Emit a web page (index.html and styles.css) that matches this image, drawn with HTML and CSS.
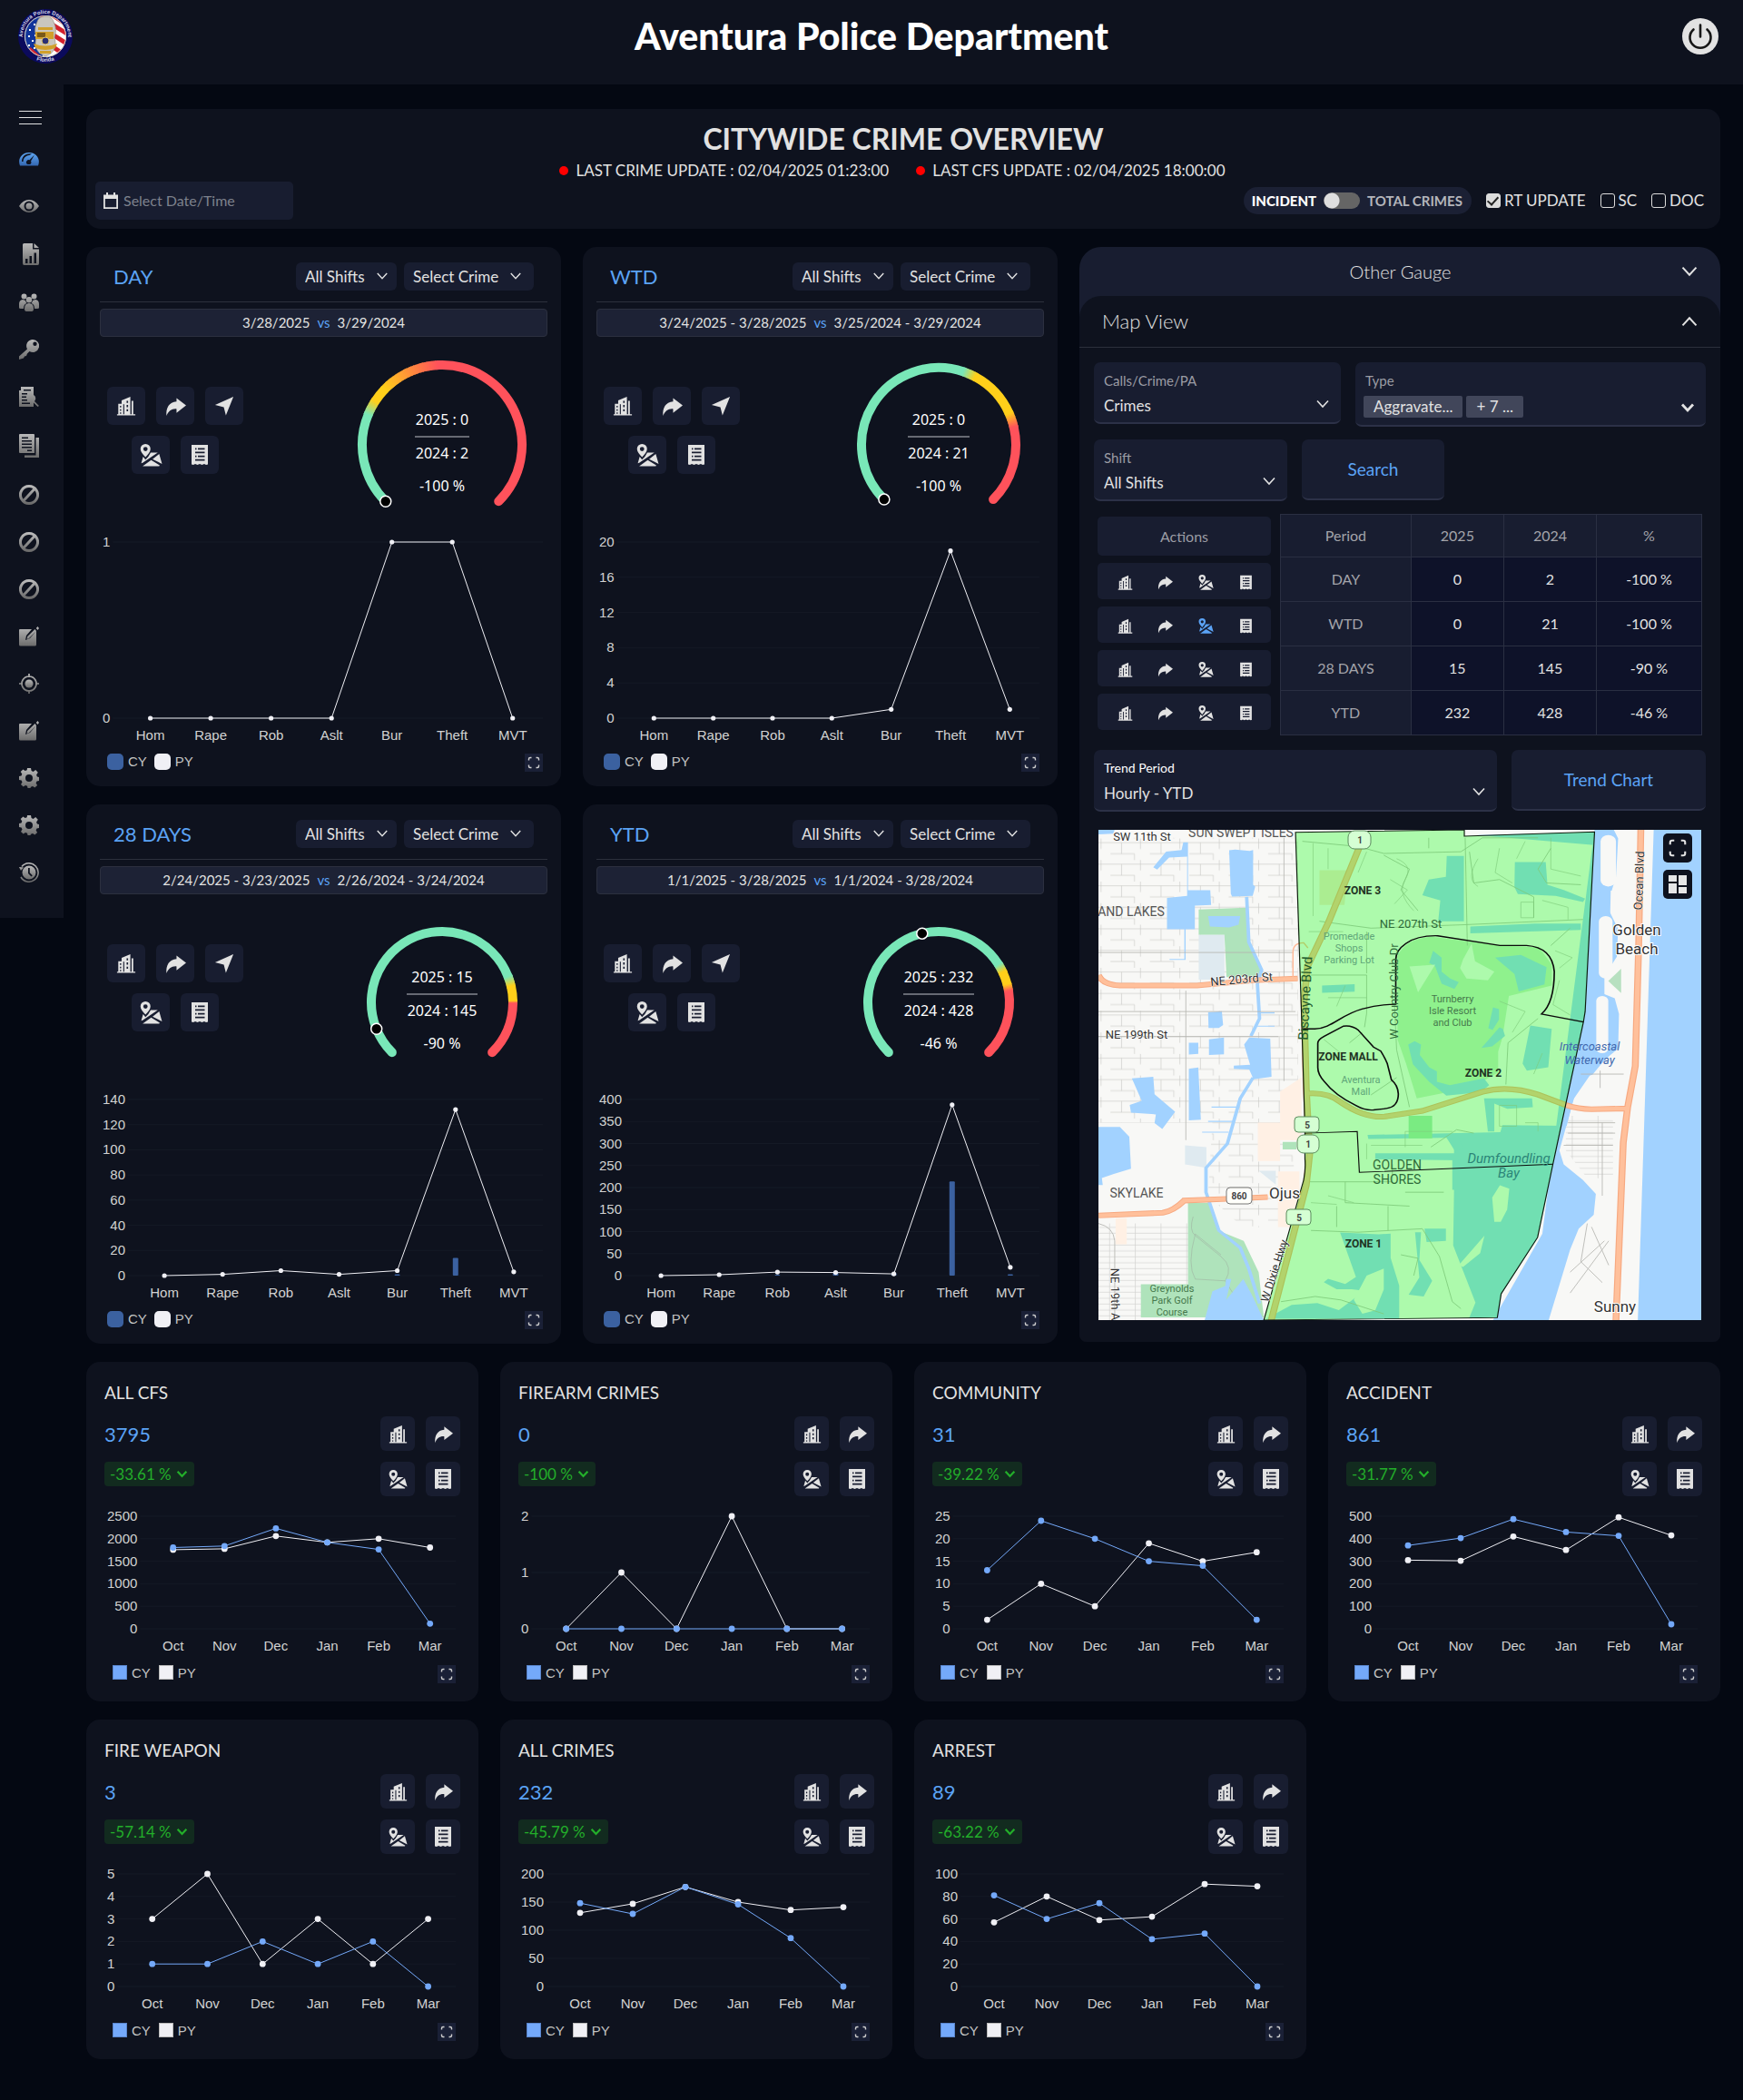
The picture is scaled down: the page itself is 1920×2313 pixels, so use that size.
FILE: index.html
```html
<!DOCTYPE html>
<html lang="en">
<head>
<meta charset="utf-8">
<meta name="viewport" content="width=device-width, initial-scale=1">
<title>Aventura Police Department</title>
<link rel="stylesheet" href="styles.css">
</head>
<body>
<svg class="sprite" width="0" height="0" aria-hidden="true">
  <defs>
    <linearGradient id="gray" x1="0" y1="0" x2="0" y2="1"><stop offset="0" stop-color="#b9b9b9"/><stop offset="1" stop-color="#6c6c6c"/></linearGradient>
    <linearGradient id="blue" x1="0" y1="0" x2="0" y2="1"><stop offset="0" stop-color="#5fa8f5"/><stop offset="1" stop-color="#3467b0"/></linearGradient>
  </defs>
  <symbol id="i-building" viewBox="0 0 24 24"><path fill-rule="evenodd" d="M1 22h1.500V9.500h4V5.500L17 1v21h1.500V6h2v16H23v1.500H1zM4.500 12v2H6v-2zm0 4v2H6v-2zm0 4v1.500H6V20zM12.500 6v2.500h1.800V6zm0 5v2.500h1.800V11zm0 5v2.500h1.800V16zM8.500 10v12h1.200V10z"/></symbol>
  <symbol id="i-share" viewBox="0 0 24 24"><path d="M13 2.500 24 11l-11 8.500V15C7.500 14.500 3.500 17.500 1.500 23 .5 14 4.500 7 13 6.500z"/></symbol>
  <symbol id="i-nav" viewBox="0 0 24 24"><path d="M23 1 14 23.500 11.500 13.500 1 11z"/></symbol>
  <symbol id="i-map" viewBox="0 0 24 24"><path fill-rule="evenodd" d="M6 0a5.300 5.300 0 0 1 5.300 5.300c0 2.800-2.600 5.700-5.300 8.700C3.300 11 .7 8.100.7 5.300A5.300 5.300 0 0 1 6 0zm0 3a2.300 2.300 0 1 0 0 4.600A2.300 2.300 0 0 0 6 3z"/><path d="M11.500 9h7.500L3 20l-1.500.5L3.500 13.500 6 16.500l3-3zM20.500 10.500 23.500 21 13.500 16zM12 17l9 5.500-.5 1H3z"/></symbol>
  <symbol id="i-list" viewBox="0 0 24 24"><path fill-rule="evenodd" d="M3 1h18v21.500l-2 .5-2-1-2.500 1-2.500-1-2.500 1-2.500-1-2 1-2-.5zM7 4.500v1.700h1.500V4.500zm3 0v1.700h7.500V4.500zM7 8.500v1.800h10.500V8.500zm0 4.200v1.700h1.500v-1.700zm3 0v1.700h7.500v-1.700zM7 16.700v1.800h10.500v-1.800z"/></symbol>
  <symbol id="i-expand" viewBox="0 0 20 20"><path d="M4.500 7.500V6q0-1.500 1.500-1.500h1.500M12.500 4.500H14q1.500 0 1.500 1.500v1.500M15.500 12.500V14q0 1.500-1.500 1.500h-1.500M7.500 15.500H6q-1.500 0-1.500-1.500v-1.500" fill="none" stroke="currentColor" stroke-width="1.400"/></symbol>
  <symbol id="i-down" viewBox="0 0 16 16"><path d="M2 4.500 8 11l6-6.500" fill="none" stroke="currentColor" stroke-width="1.600"/></symbol>
  <symbol id="i-down-bold" viewBox="0 0 16 16"><path d="M2 4.500 8 11l6-6.500" fill="none" stroke="currentColor" stroke-width="2.800"/></symbol>
  <symbol id="i-calendar" viewBox="0 0 16 18"><path fill-rule="evenodd" d="M0 2.500h3V0h2v2.500h6V0h2v2.500h3V18H0zM1.800 7v9.200h12.400V7z"/></symbol>
</svg>

<header class="topbar">
  <a class="logo" href="#" aria-label="Aventura Police Department home">
    <svg viewBox="0 0 60 60" width="60" height="60">
      <defs>
        <clipPath id="seal"><ellipse cx="30" cy="30" rx="23" ry="23"/></clipPath>
        <path id="arcTop" d="M9.500 44.300A25 25 0 1 1 50.500 44.300"/>
        <path id="arcBottom" d="M16 54.200A28.500 28.500 0 0 0 44 54.200"/>
      </defs>
      <circle cx="30" cy="30" r="30" fill="#0b0a5c"/>
      <circle cx="30" cy="30" r="23" fill="#fff"/>
      <g clip-path="url(#seal)">
        <path fill="#11349b" d="M0 0h27v60H0z"/>
        <path fill="none" stroke="#d3202c" stroke-width="5" d="M34 4l24 16M36 16l24 15M38 28l20 13M36 40l16 11M12 44l16 14M22 4l8 6"/>
        <path fill="#fff" d="M12 22h2v2h-2zm5-6h2v2h-2zm-6 13h2v2h-2zm4 5h2v2h-2zm-4 5h2v2h-2zm6 3h2v2h-2zm1-14h2v2h-2z"/>
      </g>
      <circle cx="30" cy="30" r="22.500" fill="none" stroke="#d8d4c4" stroke-width="1"/>
      <path fill="#c9c6be" stroke="#8b8676" stroke-width=".6" d="M30 8c5 0 8 2 9 6 3 6 3 11 1 17 2 8 1 13-4 18l-6 3-6-3c-5-5-6-10-4-18-2-6-2-11 1-17 1-4 4-6 9-6z"/>
      <path fill="#d1a02b" d="M22 20h16v3H22zM19 25h20v8H19zM17 38q13 5 26 0l-2 5q-11 4-22 0zM24 46h12v3H24z"/>
      <path fill="#7a5a18" d="M21 26h9v5h-9z"/>
      <circle cx="30" cy="35" r="4" fill="#2a2f74" stroke="#e5c766" stroke-width="1"/>
      <text class="seal-text"><textPath href="#arcTop" startOffset="50%" text-anchor="middle">Aventura Police Department</textPath></text>
      <text class="seal-text"><textPath href="#arcBottom" startOffset="50%" text-anchor="middle">Florida</textPath></text>
    </svg>
  </a>
  <h1>Aventura Police Department</h1>
  <button class="power" type="button" aria-label="Log out">
    <svg viewBox="0 0 40 40" width="40" height="40"><circle cx="20" cy="20" r="20" fill="#e2e2e2"/><path d="M20 7.500v13M12.500 12.500a11.500 11.500 0 1 0 15 0" fill="none" stroke="#161616" stroke-width="2.600" stroke-linecap="round"/></svg>
  </button>
</header>

<div class="shell">
  <nav class="sidebar" aria-label="Main">
    <button class="burger" type="button" aria-label="Toggle menu"><span></span><span></span><span></span></button>
    <ul id="nav"></ul>
  </nav>

  <main>
    <section class="panel overview">
      <h2>CITYWIDE CRIME OVERVIEW</h2>
      <p class="updates"><span class="dot"></span><span>LAST CRIME UPDATE : 02/04/2025 01:23:00</span><span class="dot second"></span><span>LAST CFS UPDATE : 02/04/2025 18:00:00</span></p>
      <div class="filters">
        <label class="date"><svg width="16" height="18"><use href="#i-calendar"/></svg><input type="text" placeholder="Select Date/Time" aria-label="Select Date/Time"></label>
        <div class="options">
          <label class="switch"><b>INCIDENT</b><input type="checkbox" role="switch" aria-label="Incident or total crimes"><span>TOTAL CRIMES</span></label>
          <label class="check"><input type="checkbox" checked>RT UPDATE</label>
          <label class="check"><input type="checkbox">SC</label>
          <label class="check"><input type="checkbox">DOC</label>
        </div>
      </div>
    </section>

    <div class="columns">
      <div class="periods" id="periods"></div>

      <section class="side">
        <button class="gauge-toggle" type="button"><span>Other Gauge</span><svg width="20" height="20"><use href="#i-down"/></svg></button>
        <div class="map-panel">
          <button class="map-toggle" type="button"><span>Map View</span><svg class="up" width="20" height="20"><use href="#i-down"/></svg></button>
          <div class="map-body">
            <div class="row calls">
              <label class="field"><span>Calls/Crime/PA</span><select><option>Crimes</option></select><svg width="16" height="16"><use href="#i-down"/></svg></label>
              <div class="field tall"><span id="typeLabel">Type</span><button class="chips" type="button" aria-labelledby="typeLabel"><i>Aggravate...</i><i>+ 7 ...</i></button><svg class="thick" width="16" height="16"><use href="#i-down-bold"/></svg></div>
            </div>
            <div class="row shift">
              <label class="field"><span>Shift</span><select><option>All Shifts</option></select><svg width="16" height="16"><use href="#i-down"/></svg></label>
              <button class="action" type="button">Search</button>
            </div>
            <div class="stats">
              <div class="stat-actions" id="statActions"><div class="head">Actions</div></div>
              <table>
                <thead><tr><th>Period</th><th>2025</th><th>2024</th><th>%</th></tr></thead>
                <tbody>
                  <tr><th>DAY</th><td>0</td><td>2</td><td>-100 %</td></tr>
                  <tr><th>WTD</th><td>0</td><td>21</td><td>-100 %</td></tr>
                  <tr><th>28 DAYS</th><td>15</td><td>145</td><td>-90 %</td></tr>
                  <tr><th>YTD</th><td>232</td><td>428</td><td>-46 %</td></tr>
                </tbody>
              </table>
            </div>
            <div class="row trend">
              <label class="field bright"><span>Trend Period</span><select><option>Hourly - YTD</option></select><svg width="16" height="16"><use href="#i-down"/></svg></label>
              <button class="action" type="button">Trend Chart</button>
            </div>
            <div class="map">
              <svg viewBox="0 0 664 540" role="img" aria-label="Zone map">
                <defs>
                  <pattern id="streets" width="92" height="62" patternUnits="userSpaceOnUse"><path d="M0 12H92M0 44H56M26 12V44M70 0V30M56 44V62" fill="none" stroke="#c9c9c6" stroke-width="1.500"/></pattern>
                  <pattern id="rows" width="60" height="17" patternUnits="userSpaceOnUse"><path d="M0 8H60M30 0V17" fill="none" stroke="#cfcfcc" stroke-width="1.500"/></pattern>
                </defs>
                <rect width="664" height="540" fill="#f8f8f6"/>
                <svg width="664" height="540" viewBox="64 37 1407 1411" preserveAspectRatio="none">
                  <path fill="url(#streets)" d="M64 60H530V880H64z"/>
                  <path fill="url(#streets)" d="M330 880H520V1180H400L320 1090z"/>
                  <path fill="url(#rows)" d="M64 1170H275V1350H165V1448H64zM1155 860h110v180h-60l-50-80z"/>
                  <path fill="#fff0e4" d="M488 790l50-40v180h-50zM436 880h52v110h-52zM483 1020h50v160h-50zM104 1155h26v75h-26z"/>
                  <path fill="#dfeaf0" d="M298 338h60v130h-60zM266 945l50 5v60l-50-10zM438 1018h40v40z"/>
                  <path fill="#afe3bb" d="M298 266l110-5 8 100 32 80-10 20h-75l-5-122h-60zM273 1110l50 0 20 80 60 30 35 90 12 130H163v-95l110 0zM494 935h32v22h-32z"/>
                  <path fill="none" stroke="#9fb5a3" stroke-width="1.500" d="M285 1150q-10 40 5 55l60 60q30 30 10 70l-70-5q-20-40 0-130l60 60M360 1335l45 90"/>
                  <g fill="#a2d2ff">
                    <path d="M64 37h38l-4 11-34 2zM192 145l30-45 36-5 4-22h11v138h52l2 42-38 2v68h-65v-90l47-6v-113l-42 3-28 34zM369 96l14-2 34 4 8-3v100l5 5-6 27-48 2-3-8zM320 285l75 0-4 25-22 8-45-3zM320 562l32-3 3 40-10 8h-24zM322 640l35-5v48l-35 2zM275 650l22 0v32l-22 2zM275 725l22-4 6 150-28 2zM404 655l12-20 49 3 3 110-42 7-10-28-36-2v-9l38-3zM142 752l50-4 3 50 48 50-30 50-18-17 3-25-58-5-3-22 28-12zM64 892l50 0 22 28 4 92-40 15-28 12 2 20-10 0zM330 1365l30-15 2-20 12 0-12 60 40-60 18 40 30 78H312z"/>
                    <path d="M877 112h40v188h-60l5-60-42-15 15-45 40-8zM1036 130h72l4 65 38 15 50 25-5 10-64-18-88-5-8-20zM932 315l150-8 108 0v18l-258 10zM586 485l76-4v22l-76 3zM947 52l275-8-22 520-22 120-53 320-36 208-85 162-5 65-70 4 15-45-52-165 2-160h-4l0-100 4 0 0-50-200 4-2-12 310-8 5-20 150 2 15-75 50-90 3-90-10-15 30-40 0-190 12-30 5-270-10-5z"/>
                    <path d="M875 920l25-10 15 45-18 8zM964 810l112 0 2 25-60 5-30-15v80h-15zM710 968l200 0v20l-200-3zM1072 600l50 10-8 110-50 10-10-20z"/>
                    <path d="M628 1196l90 5 28-2 0 70 20 80v95H455l60-40 60-5 50 20 60-55-30-5-35 0-30-20 10-10 40 15 25-20zM803 1195l14 0-4 80 30 60-20 45-35-5 25-50zM825 1185l50 0v35l-45 3z"/>
                    <path d="M1222 37h45l10 25-5 110-10 40-25 0-15 50 15 30 20-20 20 50-3 80-30 60-20 10 5 30 40 20 10 45-2 100-20 20-20 25-20 30-30 10L1140 960l10 40 45 45 30 40-5 60-35 40-20 60-50 203H985L1100 1200z"/>
                    <path d="M1360 37h111v1411H1323z"/>
                    <path fill="none" stroke="#a2d2ff" stroke-width="8" d="M410 230l5 130 30 80-10 40 5 100-20 50M425 750l-30 60-30 130-50 70 0 70 30 110 50 50 20 60 25 100"/>
                    <path fill="none" stroke="#a2d2ff" stroke-width="3" d="M440 564h35M435 602h40M328 835h65M320 876h60M306 907h62M266 320v90h-36"/>
                  </g>
                  <g fill="#f8f8f6"><rect x="1236" y="52" width="36" height="148" rx="18"/><rect x="1232" y="285" width="32" height="180" rx="16"/><rect x="1226" y="515" width="28" height="165" rx="14"/><path d="M988 1165l-5-70 18-35 22 10-5 60-15 35zM905 1290l60-85-10 50-40 40zM660 1390l30-70 40-20 0 60-20 60-30 10z"/></g>
                  <path fill="#b7e0c0" d="M1254 472l30-35v70z"/>
                  <path fill="#cdebcb" d="M762 400q20-50 80-55l160 25 90 5 30 50 0 60-100 30-15 120-10 40 0 60-50 35-60 20-80 20-25-100-20-70z"/>
                  <path fill="#a2d2ff" d="M845 385l20 20 0 40 20 20 20 10-10 20-30-15-15-50-14-10zM990 405l60-8 60 35-5 50-60 20-10-50zM985 548l14 5 0 30-15 30-10-5zM1000 605l8 5 5 20-30 30-25 5zM787 655l15-10 15 10-3 30 22 35 18 12 0 30 30 10 80-20 12 20-20 20-80 10-40-40-38-50z"/>
                  <path fill="#f8f8f6" d="M915 410l20-45 8 50 45 30-15 25-50-5-15-30zM790 430l60-5-40 80z"/>
                  <path fill="#afe3bb" d="M788 860h55v65h-55z"/>
                  <path fill="#f3d9b8" opacity=".6" d="M580 153h68l-10 100h-58z"/>
                  <g fill="none" stroke="#b5b5b0" stroke-width="2">
                    <path d="M268 500v430M497 60v700M64 390h456M64 560h460M64 632h420M540 70l130 15 60 20 180-5 50-40h130M580 300l120 20 220-10 275-15M920 60l5 310M560 455h130v110l-5 40M755 540l5 130 30 165M690 330v120M1090 580l-70 70-5 120M1120 370l45-50M730 110l60 40-20 60 40 60M930 100l10 90 60-10 80 50 0 60M1120 90l-30 60 20 40 80 5"/>
                    <path d="M550 1050h200v-50M560 1190l110 5 150-10 40 80 30 130 20 20M640 1050v60l150 10M780 1080h90M740 1120v70M620 1120v60M770 1260l40 10-10 50M490 1395l80-15 60 10 100 40M700 800l60-50M650 650l30-30M840 950l60-50 40 10M1190 740h100M1235 730v50M1205 1170l-15 110 50 60M1215 1180l40 110M1165 1310l80-90M1165 1370l90-150M835 60v30"/>
                    <path d="M1160 880h110M1160 910h110M1150 945h115M1240 880v210M64 1170q35 10 38 50v228"/>
                    <path stroke-width="1.500" d="M760 120q40 20 20 60t20 90M745 180l40 30-30 40M565 75v210M600 90v60M690 100l-20 60M555 330h80M1000 90l-10 70 40 30M1060 70l-20 50M1120 60v90l70 20M1050 245h30v45h-30zM1100 240l60 20v35M950 120q-30 60 0 80M620 545l20-60M600 520h90M590 640l40 40M600 1090l60 20M560 1110l60 5M780 950v-45h110M700 945h120M690 985v-45M1000 830h40v60h-40zM1060 880h30v25M1130 385l40 20-30 30M1140 470l-15 70 40 30M1000 530l60 30-30 60M1100 680l-20 60"/>
                  </g>
                  <g fill="none" stroke="#f7a981" stroke-width="16"><path d="M64 455q10 28 50 30l180 0 130-15 105-5"/><path d="M64 1147l150-8q25-5 50-35l100-5 95-5"/><path d="M672 90l-70 210-50 130-8 100 5 250 8 190-8 90-82 390M550 796q50-5 80 25 60 50 110 40l80-15 140-55q60-20 130 8l65 30q30 12 60 12l85-2M1330 37l-5 330-8 350-18 120-10 100-17 511"/></g>
                  <g fill="none" stroke="#ffc09b" stroke-width="11"><path d="M64 455q10 28 50 30l180 0 130-15 105-5"/><path d="M64 1147l150-8q25-5 50-35l100-5 95-5"/><path d="M672 90l-70 210-50 130-8 100 5 250 8 190-8 90-82 390M550 796q50-5 80 25 60 50 110 40l80-15 140-55q60-20 130 8l65 30q30 12 60 12l85-2M1330 37l-5 330-8 350-18 120-10 100-17 511"/></g>
                  <path fill="none" stroke="#ffb896" stroke-width="3" d="M518 460v-70q0-28 25-28l10 15"/>
                  <path fill="#00ff00" fill-opacity=".3" stroke="#0c1c0c" stroke-width="2.500" d="M524 44 918 37v18l304-12-22 517-4 30-71 408-36 212-85 162-9 69-545 7 93-403q5-30 3-60V900l-7-290z"/>
                  <path fill="none" stroke="#0a0a0a" stroke-width="3.500" d="M541 610h28c40-2 60-40 110-57q40-14 79-14V410c0-30 30-70 98-68l145 28h62q60 5 65 75 0 90-30 122l98 23M636 602q20-3 35 12l35 48 17 12q10 20 15 35l10 48q15 15 16 40 0 38-28 42l-30 4q-20 2-40-12-50-30-75-70-15-20-15-40v-70q0-10 15-20z"/>
                  <path fill="none" stroke="#0a0a0a" stroke-width="2.500" d="M546 910l122-5 5 118 452-24"/>
                </svg>
                <g class="shields"><rect x="141" y="394" width="28" height="18" rx="4"/><rect x="216" y="316" width="27" height="17" rx="4"/><rect x="207" y="418" width="27" height="17" rx="4"/><rect x="275" y="1" width="25" height="20" rx="7"/><rect x="219" y="336" width="24" height="20" rx="7"/></g>
                <g class="shield-text"><text x="155" y="407">860</text><text x="230" y="329">5</text><text x="221" y="431">5</text><text x="288" y="15">1</text><text x="231" y="350">1</text></g>
                <g class="street"><text x="48" y="12">SW 11th St</text><text x="158" y="169" transform="rotate(-5 158 169)">NE 203rd St</text><text x="42" y="230">NE 199th St</text><text x="344" y="108" class="green">NE 207th St</text><text transform="translate(233 186) rotate(-87)" class="major">Biscayne Blvd</text><text transform="translate(330 178) rotate(-90)" class="green">W Country Club Dr</text><text transform="translate(600 56) rotate(-88)">Ocean Blvd</text><text transform="translate(198 487) rotate(-72)">W Dixie Hwy</text><text transform="translate(14 518) rotate(89)">NE 19th Ave</text></g>
                <g class="area"><text x="157" y="8">SUN SWEPT ISLES</text><text x="36" y="95">AND LAKES</text><text x="42" y="405">SKYLAKE</text></g>
                <g class="area green"><text x="329" y="374">GOLDEN</text><text x="329" y="390">SHORES</text></g>
                <g class="town"><text x="205" y="406">Ojus</text><text x="593" y="116">Golden</text><text x="593" y="137">Beach</text><text x="569" y="531">Sunny</text></g>
                <g class="poi"><text x="276" y="121">Promedade</text><text x="276" y="134">Shops</text><text x="276" y="147">Parking Lot</text><text x="289" y="279">Aventura</text><text x="289" y="292">Mall</text></g>
                <g class="poi park"><text x="390" y="190">Turnberry</text><text x="390" y="203">Isle Resort</text><text x="390" y="216">and Club</text><text x="81" y="509">Greynolds</text><text x="81" y="522">Park Golf</text><text x="81" y="535">Course</text></g>
                <g class="water"><text x="541" y="243">Intercoastal</text><text x="541" y="258">Waterway</text><text x="452" y="367" class="bay">Dumfoundling</text><text x="452" y="383" class="bay">Bay</text></g>
                <g class="zone"><text x="291" y="71">ZONE 3</text><text x="275" y="254">ZONE MALL</text><text x="424" y="272">ZONE 2</text><text x="292" y="460">ZONE 1</text></g>
              </svg>
              <div class="map-tools">
                <button type="button" aria-label="Full screen"><svg width="30" height="30"><use href="#i-expand"/></svg></button>
                <button type="button" aria-label="Layers"><svg viewBox="0 0 32 32" width="32" height="32"><path fill="#e6e6e6" d="M6 6h9v7H6zM6 15h9v11H6zM17 6h9v11h-9zM17 19h9v7h-9z"/></svg></button>
              </div>
            </div>
          </div>
        </div>
      </section>
    </div>

    <div class="tiles" id="tiles"></div>
  </main>
</div>
<script src="app.js"></script>
</body>
</html>
```

FILE: styles.css
```css
* { box-sizing: border-box; }

body {
  margin: 0;
  background: #040812;
  color: #e2e2e2;
  font: 16px/20px Lato, "Liberation Sans", sans-serif;
}

button, input, select { font: inherit; color: inherit; margin: 0; }
button { border: 0; padding: 0; background: none; cursor: pointer; }
h1, h2, h3, p, ul { margin: 0; padding: 0; }
svg { display: block; fill: currentColor; }
.sprite { position: absolute; }

.topbar {
  display: grid;
  grid-template-columns: 1fr auto 1fr;
  align-items: start;
  height: 93px;
  padding: 10px 20px 0;
  background: #0e121e;
}
.topbar h1 { font-size: 41px; line-height: 60px; font-weight: 900; color: #fff; }
.logo { width: 60px; }
.seal-text { font: 700 6px "Liberation Sans", sans-serif; fill: #d6d8e8; }
.power { justify-self: end; margin: 10px 7px 0 0; }

.shell { display: flex; align-items: flex-start; }

.sidebar {
  flex: none;
  width: 70px;
  padding: 29px 0 39px 21px;
  background: #0e121e;
}
.burger { display: flex; flex-direction: column; gap: 6px; }
.burger span { width: 25px; height: 1px; background: #e2e2e2; }
.sidebar ul { list-style: none; display: flex; flex-direction: column; gap: 30px; margin-top: 27px; }
.sidebar li a { display: block; width: 22px; }

main { flex: 1; min-width: 0; padding: 27px 25px 45px; }

.panel { background: #0e121e; border-radius: 15px; }

.overview { padding: 16px 10px 10px; height: 132px; }
.overview h2 { text-align: center; font-size: 32px; line-height: 34px; font-weight: 700; }
.updates { display: flex; justify-content: center; align-items: center; gap: 8px; margin-top: 8px; padding-right: 24px; font-size: 17px; line-height: 20px; }
.dot { width: 10px; height: 10px; border-radius: 50%; background: #f00; }
.dot.second { margin-left: 22px; }
.filters { display: flex; justify-content: space-between; margin-top: 2px; }
.date { display: flex; align-items: center; gap: 4px; width: 218px; height: 42px; padding: 0 9px; border-radius: 5px; background: #181d30; }
.date svg { flex: none; }
.date input { width: 100%; border: 0; background: none; outline: 0; }
.date input::placeholder { color: #7d818c; opacity: 1; }
.options { display: flex; align-items: center; gap: 16px; height: 42px; padding-right: 8px; }
.switch { display: flex; align-items: center; gap: 8px; height: 30px; padding: 0 10px 0 9px; border-radius: 15px; background: #1b2034; font-size: 15px; font-weight: 700; color: #b4b5bb; }
.switch b { color: #fff; }
.switch input { appearance: none; width: 40px; height: 18px; border-radius: 9px; background: radial-gradient(circle at 9px 9px, #dedede 8px, #656565 9px); }
.check { display: flex; align-items: center; gap: 4px; font-size: 17px; }
.check input { appearance: none; width: 16px; height: 16px; border: 1px solid #dcdcdc; border-radius: 3px; background: none; }
.check input:checked { background: #dcdcdc; display: grid; place-items: center; }
.check input:checked::after { content: ""; width: 5px; height: 10px; margin-top: -2px; border: solid #222; border-width: 0 2px 2px 0; transform: rotate(42deg); }

.columns { display: grid; grid-template-columns: 535fr 353fr; gap: 24px; margin-top: 20px; align-items: start; }
.periods { display: grid; grid-template-columns: 1fr 1fr; gap: 20px 24px; }

.period { padding: 17px 15px 16px; }
.period-head { display: flex; align-items: center; gap: 8px; padding: 0 15px 12px; border-bottom: 1px solid #2c303c; }
.period-head h3 { flex: 1; font-size: 22px; line-height: 30px; font-weight: 400; color: #5ba3f5; }
.pick { position: relative; display: block; font-size: 17px; }
.pick select { appearance: none; display: block; height: 31px; padding: 0 10px; border: 0; border-radius: 6px; background: #181d30; }
.pick svg { position: absolute; right: 9px; top: 8px; pointer-events: none; }
.pick.shifts select { width: 111px; }
.pick.crime select { width: 143px; }
.pick.crime svg { right: 13px; }
.range { margin-top: 7px; padding: 5px; border: 1px solid #2c303f; border-radius: 4px; background: #1d2235; text-align: center; font-size: 15px; line-height: 19px; }
.range em { margin: 0 8px; font-style: normal; color: #5ba3f5; }
.period-mid { display: flex; justify-content: space-between; height: 209px; padding: 19px 16px 0 8px; }
.period-mid .actions { display: flex; flex-wrap: wrap; justify-content: center; align-content: flex-start; gap: 12px; width: 150px; padding-top: 36px; }
.icon { display: grid; place-items: center; width: 42px; height: 42px; border-radius: 6px; background: #181d30; }
.gauge { width: 200px; height: 200px; }
.gauge text { font: 16px "Noto Sans", sans-serif; fill: #fff; text-anchor: middle; }
.period .chart { width: calc(100% + 30px); margin: 0 -15px; }

.chart { display: block; height: auto; }
.chart text { font: 15px "Liberation Sans", Arial, sans-serif; fill: #d2d2d2; }
.chart .x { text-anchor: middle; }
.chart .y { text-anchor: end; }
.legend { display: flex; align-items: flex-start; gap: 5px; padding: 0 5px 0 8px; font: 15px/17px "Liberation Sans", Arial, sans-serif; color: #c4c4c4; }
.legend i { width: 18px; height: 18px; border-radius: 5px; background: #3b61a0; }
.legend i.py { margin-left: 3px; background: #f0f0f5; }
.legend button { margin-left: auto; background: #1a2036; color: #d0d0d0; }

.side { display: flex; flex-direction: column; border-radius: 24px 24px 8px 8px; background: linear-gradient(#181d30 90px, #0e121e 90px); }
.gauge-toggle, .map-toggle { display: flex; align-items: center; width: 100%; padding: 0 24px 0 25px; font-weight: 300; }
.gauge-toggle { height: 54px; font-size: 20px; }
.gauge-toggle span { flex: 1; padding-left: 20px; }
.map-panel { border-radius: 24px 24px 8px 8px; background: #0e121e; }
.map-toggle { justify-content: space-between; height: 57px; border-bottom: 1px solid #2c303c; font-size: 22px; }
.up { transform: rotate(180deg); }
.map-body { padding: 16px 16px 24px; }
.row { display: grid; gap: 16px; align-items: start; }
.calls { grid-template-columns: 272fr 386fr; }
.shift { grid-template-columns: 213fr 157fr 272fr; margin-top: 14px; }
.trend { grid-template-columns: 444fr 214fr; margin-top: 16px; }
.field { position: relative; display: flex; flex-direction: column; height: 68px; padding-top: 10px; border-bottom: 2px solid #2c3147; border-radius: 7px; background: #181d30; }
.field.tall { height: 71px; }
.field > span { padding: 0 11px; font-size: 15px; color: #9b9ca4; }
.field.bright > span { font-size: 14px; color: #fff; }
.field select { appearance: none; width: 100%; height: 36px; padding: 0 11px; border: 0; background: none; font-size: 17px; }
.field svg { position: absolute; right: 12px; top: 38px; pointer-events: none; }
.field .thick { top: 42px; }
.chips { display: flex; gap: 4px; padding: 7px 9px; font-size: 17px; }
.chips i { padding: 2px 11px; border-radius: 2px; background: #41465a; font-style: normal; }
.action { height: 67px; border-bottom: 2px solid #2c3147; border-radius: 7px; background: #181d30; color: #5ba3f5; font-size: 19px; }

.stats { display: grid; grid-template-columns: 191fr 465fr; gap: 10px; margin-top: 14px; padding: 0 4px; }
.stat-actions { display: flex; flex-direction: column; gap: 8px; padding-top: 3px; }
.stat-actions > div { display: flex; align-items: center; justify-content: space-between; height: 40px; padding: 3px 19px 0 22px; border-radius: 5px; background: #181d30; }
.stat-actions .head { justify-content: center; height: 43px; padding: 0; color: #9b9ca4; }
.stat-actions .active { color: #5ba3f5; }
table { width: 100%; table-layout: fixed; border-collapse: collapse; text-align: center; }
th, td { height: 49px; padding: 0; border: 1px solid #2a2f42; background: #0e1229; font-weight: 400; }
th { background: #181d30; color: #a3a4aa; }
thead th { height: 47px; }
th:nth-child(1) { width: 31%; }
th:nth-child(2), th:nth-child(3) { width: 22%; }

.map { position: relative; margin: 20px 5px 0; overflow: hidden; }
.map > svg { width: 100%; height: auto; font-family: Roboto, sans-serif; }
.map text { paint-order: stroke; text-anchor: middle; }
.street { font-size: 13px; fill: #333; stroke: #fff; stroke-width: 1px; }
.street .green, .area.green { fill: #2f6b3a; stroke: none; }
.street .major { font-size: 15px; fill: #235c2c; stroke: none; }
.area { font-size: 14px; fill: #555; }
.town { font-size: 17px; fill: #333; stroke: #fff; stroke-width: 2px; }
.poi { font-size: 11px; fill: #60a679; }
.poi.park { fill: #46794c; }
.water { font-size: 13px; font-style: italic; fill: #4168ae; }
.water .bay { font-size: 15px; fill: #2c8578; }
.zone { font-size: 12px; font-weight: 700; fill: #1f3322; }
.shields { fill: #fffffa; stroke: #777; stroke-width: 1px; }
.shields rect:nth-child(n+2) { fill: #d5ffd3; stroke: #5b8b5d; }
.shield-text { font-size: 10px; font-weight: 700; fill: #444; }
.map-tools { position: absolute; top: 4px; right: 10px; display: grid; gap: 8px; }
.map-tools button { display: grid; place-items: center; width: 32px; height: 32px; border-radius: 5px; background: #0e121e; }

.tiles { display: grid; grid-template-columns: repeat(4, 1fr); gap: 20px 24px; margin-top: 20px; }
.tile { display: flex; flex-direction: column; height: 374px; padding: 22px 20px 20px; }
.tile h3 { font-size: 19px; line-height: 24px; font-weight: 400; }
.tile-mid { display: flex; justify-content: space-between; margin-top: 14px; }
.tile .value { font-size: 22px; line-height: 40px; color: #5ba3f5; }
.badge { display: inline-flex; align-items: center; gap: 5px; height: 27px; margin-top: 10px; padding: 0 7px 0 6px; border-radius: 4px; background: #122b1f; color: #23ae2a; font-size: 17px; }
.tile .actions { display: grid; grid-template-columns: 38px 38px; gap: 12px; }
.tile .icon { width: 38px; height: 38px; }
.tile .chart { width: calc(100% + 40px); margin: 2px -20px 0; }
.tile .legend { margin-top: auto; padding: 0 5px 0 9px; }
.tile .legend i { width: 16px; height: 16px; border: 1px solid #5a86cd; border-radius: 0; background: #74a9fa; }
.tile .legend i.py { margin-left: 4px; border-color: #bbb; background: #f0f0f5; }
```

FILE: app.js
```js
const icon = (id, size) => `<svg width="${size}" height="${size}"><use href="#i-${id}"/></svg>`;
const iconButton = (id, label, size) => `<button class="icon" type="button" aria-label="${label}">${icon(id, size)}</button>`;

const legend = `<div class="legend"><i></i>CY<i class="py"></i>PY<button type="button" aria-label="Expand">${icon('expand', 20)}</button></div>`;

/* Sidebar: [label, icon height, markup] */
const ban = '<path fill="none" stroke="url(#gray)" stroke-width="3" d="M11 1.500a9.500 9.500 0 1 0 .01 0zM5 17.500 17 4.500"/>';
const edit = '<path fill-rule="evenodd" d="M1 3h13L8 10l-1 5 5-2 7-8v15q0 1.500-1.500 1.500h-16Q0 21.500 0 20V4q0-1 1-1zM20.500 0 22 2l-1.500 2-1.700-2zM17.500 3 19 5l-8 8-2.500 1 .7-3z"/>';
const gear = '<path fill-rule="evenodd" d="M9 0h4l.6 3 2 .9L18.200 2l2.600 2.700-1.700 2.700.8 2L22 10v4l-2.500.5-.9 2 1.500 2.500-2.800 2.500-2.300-1.500-2 .8L12.500 22h-3L9 19.800l-2-.8-2.300 1.500L2 18l1.500-2.500-.9-2L0 13V9l2.500-.6.8-2L1.700 4 4.400 1.500 6.700 3l2-.8zM11 7a4 4 0 1 0 0 8 4 4 0 0 0 0-8z"/>';
const items = [
  ['Dashboard', 22, '<path fill="url(#blue)" fill-rule="evenodd" d="M1 18.500C-2 11 3 4 11 4s13 7 10 14.500zM12 17a2.300 2.300 0 0 0 1-3.500l4-7-5.500 5.800A2.300 2.300 0 0 0 9.500 17zM3 14h1.600c0-4 2.500-6.500 6.800-7L14 5.500C7 4 3 8.500 3 14z"/>'],
  ['Live view', 22, '<path fill-rule="evenodd" d="M0 11q4.500-7 11-7t11 7q-4.500 7-11 7T0 11zm11-5.500a5.500 5.500 0 1 0 0 11 5.500 5.500 0 0 0 0-11zm0 2a3.500 3.500 0 1 1 0 7 3.500 3.500 0 0 1 0-7z"/>'],
  ['Reports', 24, '<path fill-rule="evenodd" d="M4 1.500Q4 0 5.500 0H15v6.500h7V22q0 2-1.500 2H5.500Q4 24 4 22zM7 17v5h2.500v-5zm4.500-3v8H14v-8zm5-3.500V22H19V10.500zM16.500 0 22 5h-5.500z"/>'],
  ['Teams', 22, '<path d="M5.500 1.500a3 3 0 1 1 0 6 3 3 0 0 1 0-6zM16.500 1.500a3 3 0 1 1 0 6 3 3 0 0 1 0-6zM11 5a3.200 3.200 0 1 1 0 6.500A3.200 3.200 0 0 1 11 5zM0 17v-4q0-4.500 4-5l3 1q.5 2 1.500 3-3.500 1-3.500 6H2q-2 0-2-1zM22 17v-4q0-4.500-4-5l-3 1q-.5 2-1.500 3 3.500 1 3.500 6h3q2 0 2-1zM6 18q0-6 5-6t5 6q0 3-2 3H8q-2 0-2-3z"/>'],
  ['Access', 22, '<path fill-rule="evenodd" d="M15 0a7 7 0 1 1-3.500 13L9 15.500 8 18l-2 .5-1 2L0 22v-3.500L9 10.500A7 7 0 0 1 15 0zm2.500 2.500a2.200 2.200 0 1 0 0 4.400 2.200 2.200 0 0 0 0-4.400z"/>'],
  ['Search records', 22, '<path fill-rule="evenodd" d="M0 4h2V0h14v9a4.500 4.500 0 0 1 1 7l5 5-1.500 1L16 17.500V22H0zM5 3v1.500h8V3zM3 7v1.500h6V7zM3 10.500V12h5v-1.500zM3 14v1.500h6V14zM3 17.500V19h9v-1.500z"/>'],
  ['Documents', 26, '<path fill-rule="evenodd" d="M1 0h15q1 0 1 1v20H1q-1 0-1-1V1q0-1 1-1zM3 3.500V5h7V3.500zM3 7v1.500h11V7zM3 10.500V12h11v-1.500zM3 14v1.500h11V14zM9 17.500V19h5v-1.500zM18.500 4H22v22H6v-2.500h12.500z"/>'],
  ['Restricted', 22, ban], ['Blocked', 22, ban], ['Exclusions', 22, ban],
  ['Edit', 22, edit],
  ['Target', 22, '<circle cx="11" cy="11" r="4.500"/><path fill="none" stroke="url(#gray)" stroke-width="1.700" d="M11 3a8 8 0 1 0 .01 0zM11 0v4M11 18v4M0 11h4M18 11h4"/>'],
  ['Compose', 22, edit],
  ['Settings', 22, gear], ['System settings', 22, gear],
  ['History', 22, '<path fill-rule="evenodd" d="M11 3.500a7.500 7.500 0 1 1 0 15 7.500 7.500 0 0 1 0-15zM10 6v6l3.500 3.500 1.300-1.300-3-3V6z"/><path fill="none" stroke="url(#gray)" stroke-width="1.600" d="M3 4.500A10.200 10.200 0 1 1 2 16"/><path d="M0 5l5 .5L2 9z"/>']
];
document.getElementById('nav').innerHTML = items.map(([label, h, body]) =>
  `<li><a href="#" aria-label="${label}"><svg viewBox="0 0 22 ${h}" width="22" height="${h}" fill="url(#gray)"><g fill="url(#gray)">${body}</g></svg></a></li>`).join('');

/* Gauges */
const GREEN = [121, 231, 184], YELLOW = [255, 207, 26], RED = [255, 82, 91];
function colorAt(t, [g, y0, y1, r]) {
  const mix = (a, b, k) => `rgb(${a.map((v, i) => Math.round(v + (b[i] - v) * k)).join()})`;
  if (t <= g) return mix(GREEN, GREEN, 0);
  if (t < y0) return mix(GREEN, YELLOW, (t - g) / (y0 - g));
  if (t <= y1) return mix(YELLOW, YELLOW, 0);
  if (t < r) return mix(YELLOW, RED, (t - y1) / (r - y1));
  return mix(RED, RED, 0);
}
function gauge({ radius, stops, at, cy, py, pct }) {
  const point = t => {
    const a = (-135 + 270 * t) * Math.PI / 180;
    return [100 + radius * Math.sin(a), 100 - radius * Math.cos(a)].map(v => v.toFixed(2));
  };
  const seg = (t0, t1, cap) => `<path d="M${point(t0)}A${radius} ${radius} 0 ${t1 - t0 > .66 ? 1 : 0} 1 ${point(t1)}" fill="none" stroke="${colorAt((t0 + t1) / 2, stops)}" stroke-width="10" stroke-linecap="${cap}"/>`;
  const [g, y0, y1, r] = stops;
  let arcs = seg(0, g, 'round') + seg(r, 1, 'round') + seg(y0, y1, 'butt');
  for (const [a, b] of [[g, y0], [y1, r]])
    for (let t = a - .004; t < b; t += .004) arcs += seg(t, t + .006, 'butt');
  const [mx, my] = point(at);
  const half = Math.max(30, py.toString().length * 5 + 24);
  return `<svg class="gauge" viewBox="0 0 200 200">${arcs}<circle cx="${mx}" cy="${my}" r="6" fill="#000" stroke="#fff" stroke-width="1.500"/>
    <text x="100" y="78">2025 : ${cy}</text><path d="M${100 - half} 91H${100 + half}" stroke="#666973" stroke-width="2"/><text x="100" y="115">2024 : ${py}</text><text x="100" y="151">${pct} %</text></svg>`;
}

/* Charts */
function chart(o) {
  const { width, height, top, bottom, left, right, labels, ticks, cy, py } = o;
  const x0 = left + 8.34 * String(ticks[ticks.length - 1]).length;
  const max = ticks[ticks.length - 1];
  const X = i => x0 + (right - x0) * (i + .5) / labels.length;
  const Y = v => bottom - (bottom - top) * v / max;
  const line = (data, color, w, r) =>
    `<polyline points="${data.map((v, i) => `${X(i).toFixed(1)},${Y(v).toFixed(1)}`).join(' ')}" fill="none" stroke="${color}" stroke-width="${w}"/>` +
    data.map((v, i) => `<circle cx="${X(i).toFixed(1)}" cy="${Y(v).toFixed(1)}" r="${r}" fill="${color}"/>`).join('');
  const grid = ticks.map(t => `<path d="M${x0 - 8} ${Y(t)}H${right}" stroke="#151a26"/><text class="y" x="${x0 - 11}" y="${Y(t) + 5}">${t}</text>`).join('');
  const names = labels.map((l, i) => `<text class="x" x="${X(i)}" y="${bottom + 24}">${l}</text>`).join('');
  const bars = o.bars ? cy.map((v, i) => v ? `<rect x="${X(i) - 3}" y="${Y(v)}" width="6" height="${bottom - Y(v)}" rx="1" fill="#3b61a0"/>` : '').join('') : '';
  return `<svg class="chart" viewBox="0 0 ${width} ${height}">${grid}${names}${bars}${line(py, '#f0f0f5', 1, o.bars ? 2.6 : 3.4)}${o.bars ? '' : line(cy, '#74a9fa', 1, 3.4)}</svg>`;
}
const range = (max, step) => Array.from({ length: max / step + 1 }, (_, i) => i * step);

const periods = [
  { name: 'DAY', a: '3/28/2025', b: '3/29/2024', ticks: range(1, 1), bars: [0, 0, 0, 0, 0, 0, 0], line: [0, 0, 0, 0, 1, 1, 0],
    gauge: { radius: 88, stops: [.25, .29, .33, .49], at: 0, cy: 0, py: 2, pct: -100 } },
  { name: 'WTD', a: '3/24/2025 - 3/28/2025', b: '3/25/2024 - 3/29/2024', ticks: range(20, 4), bars: [0, 0, 0, 0, 0, 0, 0], line: [0, 0, 0, 0, 1, 19, 1],
    gauge: { radius: 85, stops: [.57, .605, .745, .785], at: 0, cy: 0, py: 21, pct: -100 } },
  { name: '28 DAYS', a: '2/24/2025 - 3/23/2025', b: '2/26/2024 - 3/24/2024', ticks: range(140, 20), bars: [0, 0, 0, 0, 1, 14, 0], line: [0, 1, 4, 1, 4, 132, 3],
    gauge: { radius: 78, stops: [.755, .785, .83, .836], at: .085, cy: 15, py: 145, pct: -90 } },
  { name: 'YTD', a: '1/1/2025 - 3/28/2025', b: '1/1/2024 - 3/28/2024', ticks: range(400, 50), bars: [0, 0, 2, 6, 5, 214, 3], line: [0, 2, 8, 7, 4, 388, 19],
    gauge: { radius: 78, stops: [.715, .74, .78, .8], at: .45, cy: 232, py: 428, pct: -46 } }
];
const crimes = ['Hom', 'Rape', 'Rob', 'Aslt', 'Bur', 'Theft', 'MVT'];
document.getElementById('periods').innerHTML = periods.map(p => `
  <section class="panel period">
    <div class="period-head"><h3>${p.name}</h3>
      <label class="pick shifts"><select aria-label="${p.name} shift"><option>All Shifts</option></select>${icon('down', 14)}</label>
      <label class="pick crime"><select aria-label="${p.name} crime"><option>Select Crime</option></select>${icon('down', 14)}</label>
    </div>
    <p class="range">${p.a}<em>vs</em>${p.b}</p>
    <div class="period-mid">
      <div class="actions">${iconButton('building', 'Buildings', 22)}${iconButton('share', 'Share', 23)}${iconButton('nav', 'Locate', 22)}${iconButton('map', 'Show on map', 25)}${iconButton('list', 'Report', 24)}</div>
      ${gauge(p.gauge)}
    </div>
    ${chart({ width: 523, height: 250, top: 17, bottom: 211, left: 29, right: 503, labels: crimes, ticks: p.ticks, cy: p.bars, py: p.line, bars: true })}
    ${legend}
  </section>`).join('');

document.getElementById('statActions').insertAdjacentHTML('beforeend', ['DAY', 'WTD', '28 DAYS', 'YTD'].map(name =>
  `<div>${['building', 'share', 'map', 'list'].map(i => `<button type="button" aria-label="${name} ${i}"${name === 'WTD' && i === 'map' ? ' class="active"' : ''}>${icon(i, 17)}</button>`).join('')}</div>`).join(''));

const months = ['Oct', 'Nov', 'Dec', 'Jan', 'Feb', 'Mar'];
const tiles = [
  ['ALL CFS', 3795, '-33.61', range(2500, 500), [1804, 1838, 2230, 1919, 1763, 115], [1757, 1777, 2061, 1919, 2000, 1804]],
  ['FIREARM CRIMES', 0, '-100', range(2, 1), [0, 0, 0, 0, 0, 0], [0, 1, 0, 2, 0, 0]],
  ['COMMUNITY', 31, '-39.22', range(25, 5), [13, 24, 20, 15, 14, 2], [2, 10, 5, 19, 15, 17]],
  ['ACCIDENT', 861, '-31.77', range(500, 100), [370, 403, 487, 430, 413, 20], [305, 302, 410, 350, 495, 415]],
  ['FIRE WEAPON', 3, '-57.14', range(5, 1), [1, 1, 2, 1, 2, 0], [3, 5, 1, 3, 1, 3]],
  ['ALL CRIMES', 232, '-45.79', range(200, 50), [148, 129, 177, 146, 86, 0], [131, 147, 177, 150, 136, 141]],
  ['ARREST', 89, '-63.22', range(100, 20), [81, 60, 74, 42, 47, 0], [57, 80, 59, 62, 91, 89]]
];
document.getElementById('tiles').innerHTML = tiles.map(([name, value, pct, ticks, cy, py]) => `
  <section class="panel tile">
    <h3>${name}</h3>
    <div class="tile-mid">
      <div><div class="value">${value}</div><div class="badge">${pct} %${icon('down-bold', 13)}</div></div>
      <div class="actions">${iconButton('building', 'Buildings', 21)}${iconButton('share', 'Share', 21)}${iconButton('map', 'Show on map', 21)}${iconButton('list', 'Report', 24)}</div>
    </div>
    ${chart({ width: 432, height: 180, top: 20, bottom: 144, left: 34, right: 407, labels: months, ticks, cy, py })}
    ${legend}
  </section>`).join('');
```
